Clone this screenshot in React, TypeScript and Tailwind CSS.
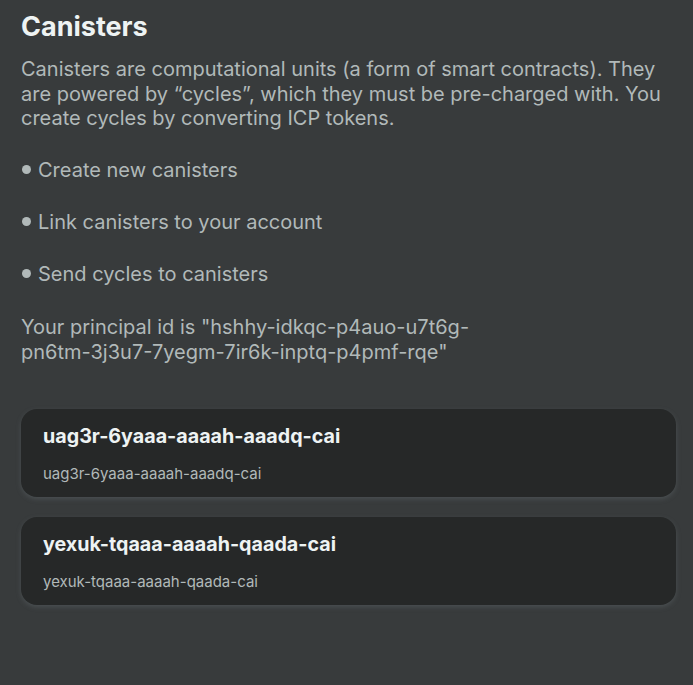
function Bullet({ children }: { children: string }) {
  return (
    <li className="flex items-center">
      <span className="mr-[7px] ml-[1px] inline-block h-[9px] w-[9px] rounded-full bg-[#b1b9b9]" />
      {children}
    </li>
  );
}

export default function App() {
  const cards = ["uag3r-6yaaa-aaaah-aaadq-cai", "yexuk-tqaaa-aaaah-qaada-cai"];
  return (
    <div className="min-h-[685px] w-full bg-[#383b3c] pl-[21px] pr-[17px] pt-[8px] text-[#b1b9b9]" style={{ fontFamily: "Inter, sans-serif" }}>
      <h1 className="text-[27px] font-bold leading-[37px] text-[#eef3f3]">Canisters</h1>
      <p className="mt-[12px] text-[20px] leading-[24.5px]">
        Canisters are computational units (a form of smart contracts). They are powered by “cycles”, which they must be pre-charged with. You create cycles by converting ICP tokens.
      </p>
      <ul className="mt-[27px] flex flex-col gap-[28px] text-[20px] leading-[24px]">
        <Bullet>Create new canisters</Bullet>
        <Bullet>Link canisters to your account</Bullet>
        <Bullet>Send cycles to canisters</Bullet>
      </ul>
      <p className="mt-[29px] text-[20px] leading-[25px]">
        Your principal id is "hshhy-idkqc-p4auo-u7t6g-
        <br />
        pn6tm-3j3u7-7yegm-7ir6k-inptq-p4pmf-rqe"
      </p>
      <div className="mt-[44px] flex flex-col gap-[20px]">
        {cards.map((c) => (
          <div key={c} className="h-[88px] rounded-[16px] bg-[#262828] px-[22px] pt-[14px] shadow-[0_2px_5px_rgba(110,118,122,0.35)]">
            <div className="text-[19.7px] font-bold leading-[26px] text-[#eef3f3]">{c}</div>
            <div className="mt-[15px] text-[15px] leading-[20px] text-[#b1b9b9]">{c}</div>
          </div>
        ))}
      </div>
    </div>
  );
}
